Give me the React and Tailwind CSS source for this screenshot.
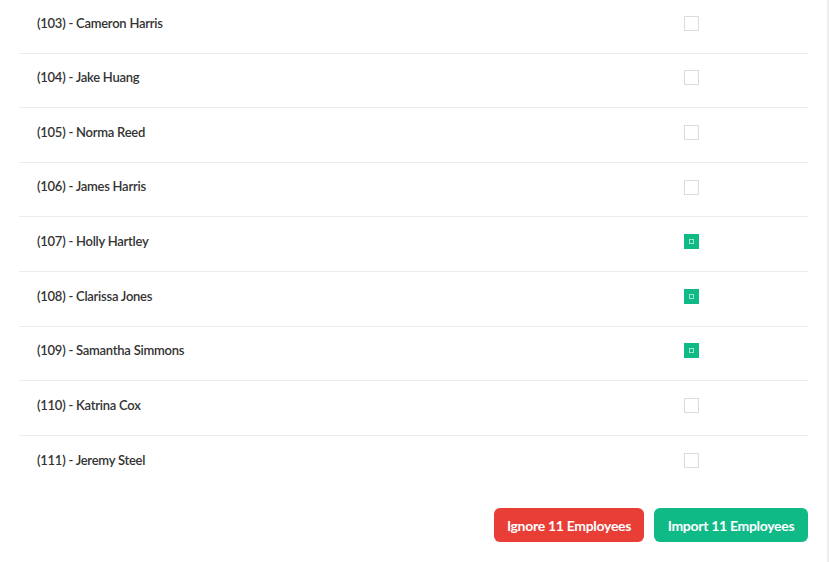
const EMPLOYEES = [
  { id: 103, name: 'Cameron Harris', checked: false },
  { id: 104, name: 'Jake Huang', checked: false },
  { id: 105, name: 'Norma Reed', checked: false },
  { id: 106, name: 'James Harris', checked: false },
  { id: 107, name: 'Holly Hartley', checked: true },
  { id: 108, name: 'Clarissa Jones', checked: true },
  { id: 109, name: 'Samantha Simmons', checked: true },
  { id: 110, name: 'Katrina Cox', checked: false },
  { id: 111, name: 'Jeremy Steel', checked: false },
]

function Checkbox({ checked }) {
  if (checked) {
    return (
      <span className="w-[15px] h-[15px] bg-[#0fba87] flex items-center justify-center">
        <span className="w-[5px] h-[5px] border border-[#9fe6cf]" />
      </span>
    )
  }
  return <span className="w-[15px] h-[15px] border border-[#dcdcdc] bg-white" />
}

export default function App() {
  return (
    <div className="w-[829px] h-[562px] bg-white overflow-hidden flex" style={{ fontFamily: 'Lato, "Open Sans", sans-serif' }}>
      <div className="flex-1 flex flex-col px-[19px] -mt-[1px]">
        {EMPLOYEES.map((e, i) => (
          <div
            key={e.id}
            className={`h-[54.6px] shrink-0 flex items-center pb-[5px] ${i < EMPLOYEES.length - 1 ? 'border-b border-[#ececec]' : ''}`}
          >
            <span className="pl-[18px] text-[13px] tracking-[-0.25px] font-semibold text-[#333] w-[665px]">
              ({e.id}) - {e.name}
            </span>
            <Checkbox checked={e.checked} />
          </div>
        ))}
        <div className="flex justify-end gap-[10px] mt-[18px]">
          <button className="h-[34px] w-[150px] rounded-md bg-[#e83e36] text-white text-[14px] tracking-[-0.3px] font-bold">
            Ignore 11 Employees
          </button>
          <button className="h-[34px] w-[154px] rounded-md bg-[#0fba87] text-white text-[14px] tracking-[-0.3px] font-bold">
            Import 11 Employees
          </button>
        </div>
      </div>
      <div className="w-[2px] bg-[#eeeeee]" />
    </div>
  )
}
